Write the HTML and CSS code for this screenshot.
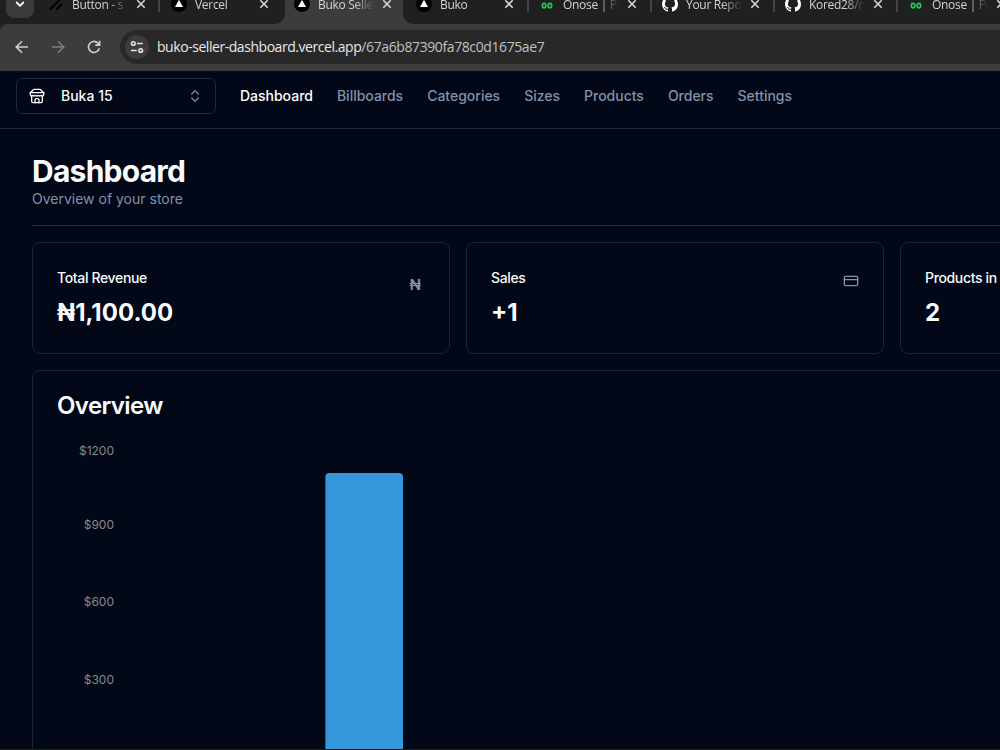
FILE: index.html
```html
<!DOCTYPE html>
<html lang="en">
<head>
    <meta charset="UTF-8">
    <meta name="viewport" content="width=device-width, initial-scale=1.0">
    <title>Buko Seller Dashboard</title>
    <link rel="stylesheet" href="styles.css">
</head>
<body>
    <svg class="sprite">
        <symbol id="vercel" viewBox="0 0 16 16">
            <circle cx="8" cy="8" r="8" fill="#000"/>
            <path d="M8 3.8 12 11H4z" fill="#fff"/>
        </symbol>
        <symbol id="slashes" viewBox="0 0 16 16">
            <path d="M2.5 13 12 3.5M9 13l4.5-4.5" stroke="#000" stroke-width="1.8" stroke-linecap="round"/>
        </symbol>
        <symbol id="loops" viewBox="0 0 16 16">
            <g fill="none" stroke="#22c550" stroke-width="1.8">
                <rect x="3.4" y="7.4" width="3.4" height="4.4" rx="1.5"/>
                <rect x="9.2" y="7.4" width="3.4" height="4.4" rx="1.5"/>
            </g>
        </symbol>
        <symbol id="github" viewBox="0 0 16 16">
            <path fill="#fff" d="M8 0C3.58 0 0 3.58 0 8c0 3.54 2.29 6.53 5.47 7.59.4.07.55-.17.55-.38 0-.19-.01-.82-.01-1.49-2.01.37-2.53-.49-2.69-.94-.09-.23-.48-.94-.82-1.13-.28-.15-.68-.52-.01-.53.63-.01 1.08.58 1.23.82.72 1.21 1.87.87 2.33.66.07-.52.28-.87.51-1.07-1.78-.2-3.64-.89-3.64-3.95 0-.87.31-1.59.82-2.15-.08-.2-.36-1.02.08-2.12 0 0 .67-.21 2.2.82A7.6 7.6 0 0 1 8 3.86c.68 0 1.36.09 2 .27 1.53-1.04 2.2-.82 2.2-.82.44 1.1.16 1.92.08 2.12.51.56.82 1.27.82 2.15 0 3.07-1.87 3.75-3.65 3.95.29.25.54.73.54 1.48 0 1.07-.01 1.93-.01 2.2 0 .21.15.46.55.38A8.01 8.01 0 0 0 16 8c0-4.42-3.58-8-8-8z"/>
        </symbol>
        <symbol id="close" viewBox="0 0 10 10">
            <path d="m1.3 1.3 7.4 7.4m0-7.4L1.3 8.7" stroke="#d6d6d6" stroke-width="1.6"/>
        </symbol>
    </svg>

    <div class="tabs">
        <div class="tab-search">
            <svg width="10" height="8" viewBox="0 0 10 8" fill="none" stroke="#fff" stroke-width="1.8"><path d="m1.2 2 3.8 3.8L8.8 2"/></svg>
        </div>
        <div class="tab"><svg class="favicon"><use href="#slashes"/></svg><span class="tab-title">Button - s</span><svg class="close"><use href="#close"/></svg></div>
        <div class="tab before-active"><svg class="favicon"><use href="#vercel"/></svg><span class="tab-title">Vercel</span><svg class="close"><use href="#close"/></svg></div>
        <div class="tab active"><svg class="favicon"><use href="#vercel"/></svg><span class="tab-title">Buko Selle</span><svg class="close"><use href="#close"/></svg></div>
        <div class="tab after-active"><svg class="favicon"><use href="#vercel"/></svg><span class="tab-title">Buko</span><svg class="close"><use href="#close"/></svg></div>
        <div class="tab"><svg class="favicon"><use href="#loops"/></svg><span class="tab-title">Onose | Po</span><svg class="close"><use href="#close"/></svg></div>
        <div class="tab"><svg class="favicon"><use href="#github"/></svg><span class="tab-title">Your Repo</span><svg class="close"><use href="#close"/></svg></div>
        <div class="tab"><svg class="favicon"><use href="#github"/></svg><span class="tab-title">Kored28/r</span><svg class="close"><use href="#close"/></svg></div>
        <div class="tab"><svg class="favicon"><use href="#loops"/></svg><span class="tab-title">Onose | Po</span><svg class="close"><use href="#close"/></svg></div>
    </div>

    <div class="toolbar">
        <svg class="tool" viewBox="0 0 16 16" stroke="#d0d0d0"><path d="M14 8H2.5M8 2.2 2.2 8 8 13.8"/></svg>
        <svg class="tool" viewBox="0 0 16 16" stroke="#7f7f7f"><path d="M2 8h11.5M8 2.2 13.8 8 8 13.8"/></svg>
        <svg class="tool" viewBox="0 0 16 16" stroke="#d0d0d0"><path d="M13.3 9.2A5.5 5.5 0 1 1 12 4.2l1.5 1.6M13.6 1.8v4.3H9.3"/></svg>
        <div class="address">
            <div class="site-info">
                <svg width="14" height="14" viewBox="0 0 14 14" fill="none" stroke="#e3e3e3" stroke-width="1.6"><circle cx="3.3" cy="3.5" r="1.8"/><path d="M7 3.5h5.8M1 10.5h5.8"/><circle cx="10.7" cy="10.5" r="1.8"/></svg>
            </div>
            <span class="host">buko-seller-dashboard.vercel.app</span><span class="path">/67a6b87390fa78c0d1675ae7</span>
        </div>
    </div>

    <header class="navbar">
        <button class="store-switcher">
            <svg class="icon" viewBox="0 0 24 24"><path d="m2 7 4.41-4.41A2 2 0 0 1 7.83 2h8.34a2 2 0 0 1 1.42.59L22 7"/><path d="M4 12v8a2 2 0 0 0 2 2h12a2 2 0 0 0 2-2v-8"/><path d="M15 22v-4a2 2 0 0 0-2-2h-2a2 2 0 0 0-2 2v4"/><path d="M2 7h20"/><path d="M22 7v3a2 2 0 0 1-2 2 2.7 2.7 0 0 1-1.59-.63.7.7 0 0 0-.82 0A2.7 2.7 0 0 1 16 12a2.7 2.7 0 0 1-1.59-.63.7.7 0 0 0-.82 0A2.7 2.7 0 0 1 12 12a2.7 2.7 0 0 1-1.59-.63.7.7 0 0 0-.82 0A2.7 2.7 0 0 1 8 12a2.7 2.7 0 0 1-1.59-.63.7.7 0 0 0-.82 0A2.7 2.7 0 0 1 4 12a2 2 0 0 1-2-2V7"/></svg>
            <span>Buka 15</span>
            <svg class="icon chevrons" viewBox="0 0 24 24"><path d="m7 15 5 5 5-5M7 9l5-5 5 5"/></svg>
        </button>
        <nav>
            <a class="current">Dashboard</a>
            <a>Billboards</a>
            <a>Categories</a>
            <a>Sizes</a>
            <a>Products</a>
            <a>Orders</a>
            <a>Settings</a>
        </nav>
    </header>

    <main>
        <h1>Dashboard</h1>
        <p class="description">Overview of your store</p>
        <hr>
        <div class="stats">
            <div class="card stat">
                <div class="stat-head">
                    <h3>Total Revenue</h3>
                    <span class="naira">₦</span>
                </div>
                <div class="value">₦1,100.00</div>
            </div>
            <div class="card stat">
                <div class="stat-head">
                    <h3>Sales</h3>
                    <svg class="icon card-icon" viewBox="0 0 24 24"><rect width="20" height="14" x="2" y="5" rx="2"/><path d="M2 10h20"/></svg>
                </div>
                <div class="value">+1</div>
            </div>
            <div class="card stat">
                <div class="stat-head">
                    <h3>Products in</h3>
                </div>
                <div class="value">2</div>
            </div>
        </div>
        <div class="card overview">
            <h2>Overview</h2>
            <div class="chart">
                <div class="axis">
                    <span>$1200</span>
                    <span>$900</span>
                    <span>$600</span>
                    <span>$300</span>
                </div>
                <div class="bar"></div>
            </div>
        </div>
    </main>
</body>
</html>
```
FILE: styles.css
```css
* {
    box-sizing: border-box;
}

body {
    margin: 0;
    height: 750px;
    overflow: hidden;
    display: flex;
    flex-direction: column;
    background-color: #020817;
    border-bottom: 1px solid #1c1c1c;
    color: #f8fafc;
    font-family: Inter, sans-serif;
    font-size: 14px;
    line-height: 20px;
}

h1, h2, h3, p {
    margin: 0;
}

svg {
    flex-shrink: 0;
}

.sprite {
    display: none;
}

/* browser tabs */
.tabs {
    display: flex;
    flex-shrink: 0;
    height: 24px;
    overflow: hidden;
    background-color: #1f2020;
    font-family: "Open Sans", sans-serif;
    font-size: 12px;
    color: #d2d2d2;
}

.tab-search {
    width: 28px;
    height: 18px;
    flex-shrink: 0;
    margin: 0 3px 0 6px;
    border-radius: 0 0 8px 8px;
    background-color: #3b3b3b;
    display: flex;
    justify-content: center;
}

.tab {
    width: 123px;
    flex-shrink: 0;
    display: flex;
    padding-left: 11px;
    background: linear-gradient(#454545, #454545) right 0 top / 2px 12px no-repeat;
}

.before-active,
.after-active {
    position: relative;
    background-color: #1f2020;
}

.before-active {
    width: 125px;
    background-image: none;
    border-bottom-right-radius: 10px;
}

.active {
    width: 118px;
    padding-left: 9px;
    background: #3c3c3c;
    box-shadow: -10px 0 0 #3c3c3c, 10px 0 0 #3c3c3c;
}

.after-active {
    width: 126px;
    padding-left: 13px;
    border-bottom-left-radius: 10px;
}

.after-active ~ .tab {
    padding-left: 10px;
}

.favicon {
    width: 16px;
    height: 16px;
    margin: -4px 8px 0 0;
}

.tab-title {
    width: 56px;
    overflow: hidden;
    white-space: nowrap;
    line-height: 10px;
    height: 14px;
    letter-spacing: -0.3px;
    -webkit-mask-image: linear-gradient(to right, #000 65%, transparent);
    mask-image: linear-gradient(to right, #000 65%, transparent);
}

.close {
    width: 10px;
    height: 10px;
    margin: -1px 0 0 8px;
}

/* address bar */
.toolbar {
    height: 47px;
    flex-shrink: 0;
    display: flex;
    align-items: center;
    padding: 0 0 1px 14px;
    gap: 20px;
    background: radial-gradient(circle at 8px 8px, #3c3c3c 7.5px, #1f2020 8.5px) 0 0 / 8px 8px no-repeat #3c3c3c;
}

.tool {
    width: 16px;
    height: 16px;
    fill: none;
    stroke-width: 1.6;
}

.address {
    flex: 1;
    display: flex;
    align-items: center;
    height: 34px;
    margin-left: -2px;
    padding-left: 5px;
    border-radius: 17px 0 0 17px;
    background-color: #282828;
    font-family: "Open Sans", sans-serif;
    font-size: 14px;
    line-height: 18px;
    letter-spacing: -0.45px;
}

.site-info {
    width: 24px;
    height: 24px;
    margin-right: 8px;
    border-radius: 50%;
    background-color: #3c3c3c;
    display: flex;
    align-items: center;
    justify-content: center;
}

.host {
    color: #e8e8e8;
}

.path {
    color: #c0c0c0;
    letter-spacing: -0.4px;
}

/* store navigation */
.navbar {
    height: 58px;
    flex-shrink: 0;
    display: flex;
    align-items: center;
    padding: 0 16px 7px;
    border-bottom: 1px solid #1e293b;
}

.icon {
    width: 16px;
    height: 16px;
    fill: none;
    stroke: currentColor;
    stroke-width: 2;
    stroke-linecap: round;
    stroke-linejoin: round;
}

.store-switcher {
    width: 200px;
    height: 36px;
    display: flex;
    align-items: center;
    gap: 16px;
    padding: 0 12px;
    border: 1px solid #1e293b;
    border-radius: 6px;
    background: none;
    color: #f8fafc;
    font: 500 14px/20px Inter, sans-serif;
}

.chevrons {
    margin-left: auto;
    opacity: 0.5;
}

nav {
    display: flex;
    gap: 24px;
    margin-left: 24px;
    font-weight: 500;
    letter-spacing: -0.01px;
    color: #8192aa;
}

.current {
    color: #fff;
}

/* dashboard */
main {
    flex-shrink: 0;
    width: 1350px;
    padding: 24px 32px 0;
}

h1 {
    font-size: 30px;
    line-height: 36px;
    letter-spacing: -0.75px;
}

.description {
    color: #8192aa;
}

hr {
    height: 1px;
    margin: 16px 0;
    border: 0;
    background-color: #1e293b;
}

.card {
    border: 1px solid #19233a;
    border-radius: 8px;
}

.stats {
    display: grid;
    grid-template-columns: repeat(3, 418px);
    gap: 16px;
}

.stat {
    height: 112px;
    padding: 24px;
}

.stat-head {
    display: flex;
    justify-content: space-between;
    height: 29px;
}

h3 {
    font-size: 14px;
    font-weight: 500;
    line-height: 22px;
    letter-spacing: -0.35px;
}

.naira {
    margin: 8px 4px 0 0;
    font-size: 15px;
    font-weight: 600;
    color: #8192aa;
}

.card-icon {
    margin-top: 6px;
    color: #8192aa;
}

.value {
    font-size: 24px;
    font-weight: 700;
    line-height: 33px;
}

.overview {
    height: 420px;
    margin-top: 16px;
    padding: 23px 24px 0;
}

h2 {
    font-size: 24px;
    font-weight: 600;
    line-height: 24px;
    letter-spacing: -0.6px;
}

.chart {
    display: flex;
    padding-top: 23px;
}

.axis {
    display: grid;
    grid-template-rows: 74px 77px 78px 77px;
    width: 57px;
    text-align: right;
    font-size: 12px;
    color: #888;
}

.bar {
    width: 78px;
    height: 340px;
    margin: 32px 0 0 211px;
    border-left: 1px solid #1f5f8b;
    border-radius: 4px 4px 0 0;
    background-color: #3498db;
}
```
